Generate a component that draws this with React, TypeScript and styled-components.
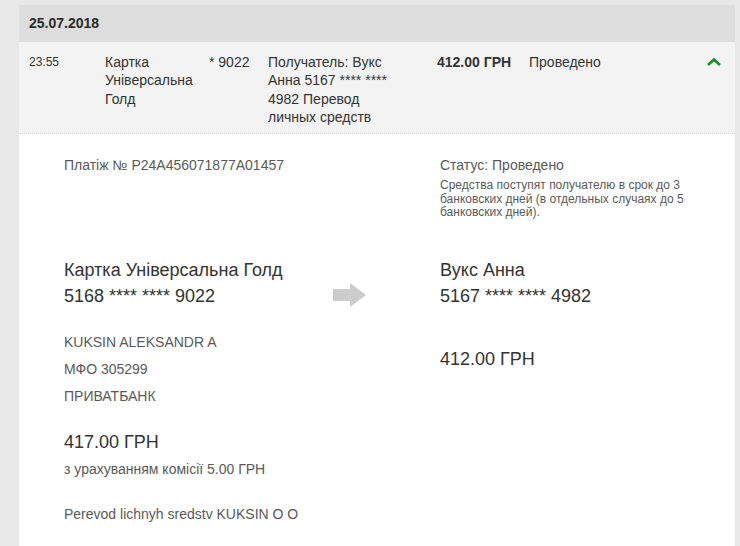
import React from "react";
import styled, { createGlobalStyle } from "styled-components";

const Global = createGlobalStyle`
  html, body { margin: 0; padding: 0; }
  body {
    background: #e8e8e8;
    font-family: "Liberation Sans", Arial, sans-serif;
    color: #333;
  }
`;

const Page = styled.div`
  padding: 5px 5px 0 19px;
  height: 546px;
  box-sizing: border-box;
  overflow: hidden;
`;

const Panel = styled.div`
  width: 716px;
  min-height: 100%;
  background: #fff;
`;

const DateBar = styled.div`
  height: 37px;
  line-height: 37px;
  padding-left: 10px;
  background: #dddddd;
  font-weight: bold;
  font-size: 14px;
  color: #2b2b2b;
`;

const Row = styled.div`
  display: grid;
  grid-template-columns: 76px 104px 59px 169px 92px 1fr 40px;
  padding: 10.5px 14px 6.5px 10px;
  background: #f3f3f3;
  border-bottom: 1px dotted #d6d6d6;
  font-size: 14px;
  line-height: 18.5px;
  color: #333;
`;

const Cell = styled.div<{ $max?: number; $size?: number; $bold?: boolean }>`
  max-width: ${(p) => (p.$max ? `${p.$max}px` : "none")};
  font-size: ${(p) => p.$size ?? 14}px;
  font-weight: ${(p) => (p.$bold ? "bold" : "normal")};
`;

const Chevron = styled.div`
  justify-self: end;
  padding-top: 5.5px;
  display: flex;
`;

const Details = styled.div`
  display: grid;
  grid-template-columns: 269px 33px 74px 1fr;
  padding: 23px 20px 40px 45px;
  background: #fff;
`;

const InfoLine = styled.div<{ $col: string }>`
  grid-column: ${(p) => p.$col};
  font-size: 14px;
  line-height: 16px;
  color: #5a5a5a;
`;

const Note = styled.div`
  margin-top: 6px;
  font-size: 12px;
  line-height: 13.5px;
  color: #5a5a5a;
`;

const Column = styled.div<{ $col: string }>`
  grid-column: ${(p) => p.$col};
  margin-top: 37px;
  display: flex;
  flex-direction: column;
`;

const Big = styled.div<{ $gap?: number }>`
  margin-top: ${(p) => p.$gap ?? 0}px;
  font-size: 18px;
  line-height: 26px;
  color: #333;
`;

const Small = styled.div<{ $gap?: number; $lh?: number }>`
  margin-top: ${(p) => p.$gap ?? 0}px;
  font-size: 14px;
  line-height: ${(p) => p.$lh ?? 20}px;
  color: #5a5a5a;
`;

const ArrowCell = styled.div`
  grid-column: 2;
  margin-top: 63px;
`;

export default function App() {
  return (
    <>
      <Global />
      <Page>
        <Panel>
          <DateBar>25.07.2018</DateBar>
          <Row>
            <Cell $size={12}>23:55</Cell>
            <Cell $max={95}>Картка Універсальна Голд</Cell>
            <Cell>* 9022</Cell>
            <Cell $max={128}>Получатель: Вукс Анна 5167 **** **** 4982 Перевод личных средств</Cell>
            <Cell $bold>412.00 ГРН</Cell>
            <Cell>Проведено</Cell>
            <Chevron>
              <svg width="14" height="8" viewBox="0 0 14 8">
                <path d="M1 7 L7 1.5 L13 7" fill="none" stroke="#17901f" strokeWidth="2.6" />
              </svg>
            </Chevron>
          </Row>
          <Details>
            <InfoLine $col="1 / span 3">Платіж № P24A456071877A01457</InfoLine>
            <InfoLine $col="4">
              Статус: Проведено
              <Note>
                Средства поступят получателю в срок до 3 банковских дней (в отдельных случаях до 5
                банковских дней).
              </Note>
            </InfoLine>
            <Column $col="1">
              <Big>Картка Універсальна Голд</Big>
              <Big>5168 **** **** 9022</Big>
              <Small $gap={20} $lh={27}>KUKSIN ALEKSANDR A</Small>
              <Small $lh={27}>МФО 305299</Small>
              <Small $lh={27}>ПРИВАТБАНК</Small>
              <Big $gap={19}>417.00 ГРН</Big>
              <Small $gap={4}>з урахуванням комісії 5.00 ГРН</Small>
              <Small $gap={25}>Perevod lichnyh sredstv KUKSIN O O</Small>
            </Column>
            <ArrowCell>
              <svg width="33" height="24" viewBox="0 0 33 24">
                <path d="M0 6 H17 V0 L33 12 L17 24 V18 H0 Z" fill="#cccccc" />
              </svg>
            </ArrowCell>
            <Column $col="4">
              <Big>Вукс Анна</Big>
              <Big>5167 **** **** 4982</Big>
              <Big $gap={37}>412.00 ГРН</Big>
            </Column>
          </Details>
        </Panel>
      </Page>
    </>
  );
}
